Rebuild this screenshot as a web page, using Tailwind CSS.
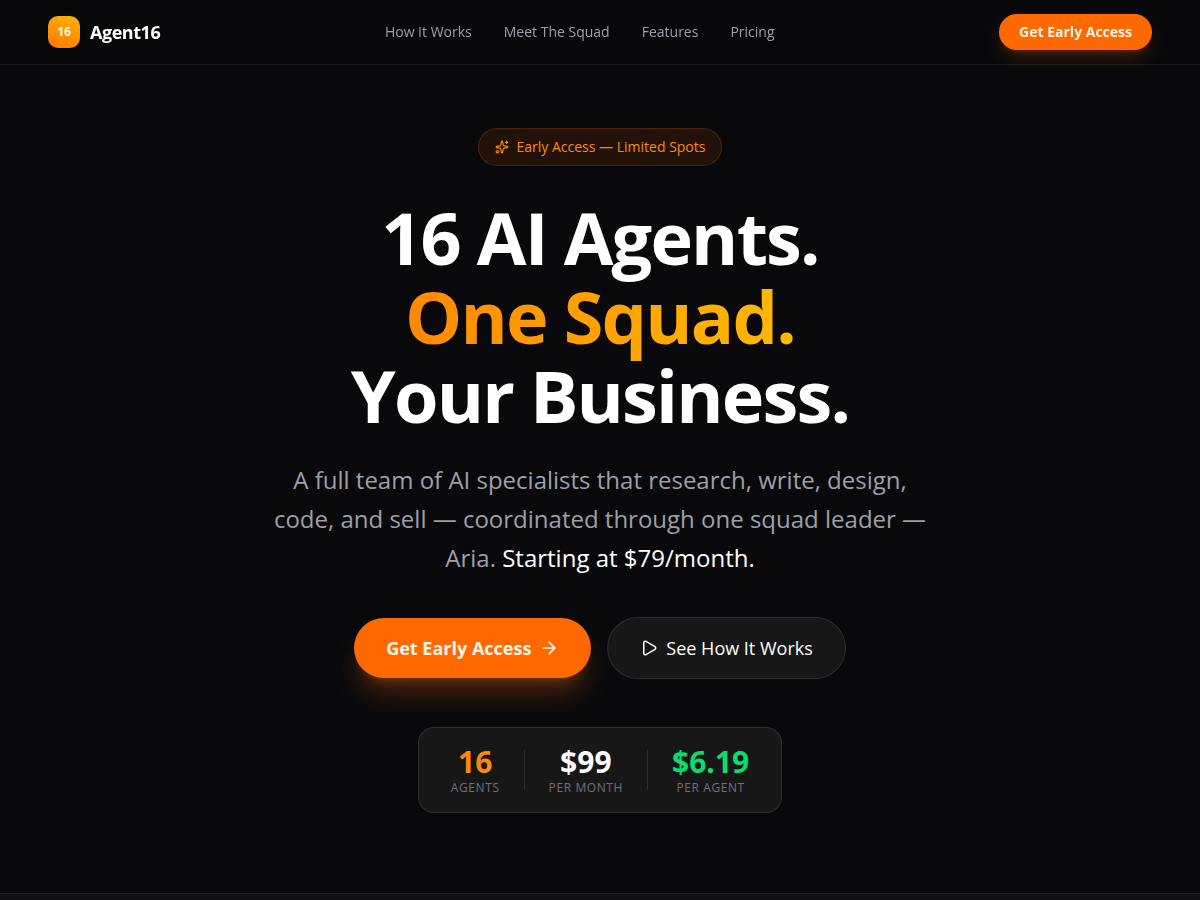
<!DOCTYPE html>
<html lang="en">
<head>
    <meta charset="UTF-8">
    <meta name="viewport" content="width=device-width, initial-scale=1.0">
    <title>Agent16</title>
    <script src="https://cdn.jsdelivr.net/npm/@tailwindcss/browser@4"></script>
</head>
<body class="bg-[#09090b] text-white font-['Open_Sans',sans-serif] antialiased">
    <!-- Navbar -->
    <header class="fixed top-0 inset-x-0 z-10 border-b border-white/8 bg-[#09090b]/80">
        <div class="h-16 px-12 flex items-center justify-between">
            <a href="#" class="flex items-center gap-2.5">
                <span class="w-8 h-8 rounded-[10px] bg-linear-[20deg] from-[#ff7600] to-[#ffb400] flex items-center justify-center text-xs font-bold">16</span>
                <span class="text-lg font-bold tracking-tight">Agent16</span>
            </a>
            <nav class="flex items-center gap-8 text-sm text-[#9f9fa9]">
                <a href="#how">How It Works</a>
                <a href="#squad">Meet The Squad</a>
                <a href="#features">Features</a>
                <a href="#pricing">Pricing</a>
            </nav>
            <button type="button" class="px-5 py-2 rounded-full bg-[#ff6900] text-sm font-bold text-[#fff7ed] shadow-lg shadow-[#ff6900]/20">Get Early Access</button>
        </div>
    </header>

    <main class="min-h-screen flex flex-col">
        <!-- Hero -->
        <section class="pt-32 pb-20 px-6 flex flex-col items-center text-center">
            <div class="mb-8 px-4 py-2 flex items-center gap-2 rounded-full border border-[#ff6900]/20 bg-[#ff6900]/10 text-sm text-[#ff8904]">
                <svg class="w-3.5 h-3.5" viewBox="0 0 24 24" fill="none" stroke="currentColor" stroke-width="2" stroke-linecap="round" stroke-linejoin="round" aria-hidden="true">
                    <path d="M11.017 2.814a1 1 0 0 1 1.966 0l1.051 5.558a2 2 0 0 0 1.594 1.594l5.558 1.051a1 1 0 0 1 0 1.966l-5.558 1.051a2 2 0 0 0-1.594 1.594l-1.051 5.558a1 1 0 0 1-1.966 0l-1.051-5.558a2 2 0 0 0-1.594-1.594l-5.558-1.051a1 1 0 0 1 0-1.966l5.558-1.051a2 2 0 0 0 1.594-1.594z" />
                    <path d="M20 2v4" />
                    <path d="M22 4h-4" />
                    <circle cx="4" cy="20" r="2" />
                </svg>
                <span>Early Access — Limited Spots</span>
            </div>

            <h1 class="mb-6 text-7xl leading-[1.1] font-bold tracking-tight">
                16 AI Agents.<br>
                <span class="bg-linear-to-r from-[#ff8904] to-[#ffb900] bg-clip-text text-transparent">One Squad.</span><br>
                Your Business.
            </h1>

            <p class="mb-10 max-w-2xl text-2xl leading-[39px] text-[#9f9fa9]">
                A full team of AI specialists that research, write, design, code, and sell — coordinated through one squad leader — Aria. <span class="text-white">Starting at $79/month.</span>
            </p>

            <div class="mb-12 flex items-center gap-4">
                <button type="button" class="px-8 py-4 flex items-center gap-2 rounded-full bg-[#ff6900] text-lg font-bold text-[#fff7ed] shadow-xl shadow-[#ff6900]/25">
                    Get Early Access
                    <svg class="w-5 h-5" viewBox="0 0 24 24" fill="none" stroke="currentColor" stroke-width="2" stroke-linecap="round" stroke-linejoin="round" aria-hidden="true">
                        <path d="M5 12h14" />
                        <path d="m12 5 7 7-7 7" />
                    </svg>
                </button>
                <button type="button" class="px-8 py-4 flex items-center gap-2 rounded-full border border-white/10 bg-[#171717] text-lg">
                    <svg class="w-[18px] h-[18px]" viewBox="0 0 24 24" fill="none" stroke="currentColor" stroke-width="2" stroke-linecap="round" stroke-linejoin="round" aria-hidden="true">
                        <path d="M5 5a2 2 0 0 1 3.008-1.728l11.997 6.998a2 2 0 0 1 .003 3.458l-12 7A2 2 0 0 1 5 19z" />
                    </svg>
                    See How It Works
                </button>
            </div>

            <!-- Stats -->
            <div class="px-8 py-4 flex items-center gap-6 rounded-2xl border border-white/10 bg-[#171717]">
                <div>
                    <div class="text-3xl font-bold text-[#ff8904]">16</div>
                    <div class="text-xs tracking-wider uppercase text-[#71717b]">Agents</div>
                </div>
                <div class="w-px h-10 bg-white/10"></div>
                <div>
                    <div class="text-3xl font-bold">$99</div>
                    <div class="text-xs tracking-wider uppercase text-[#71717b]">Per month</div>
                </div>
                <div class="w-px h-10 bg-white/10"></div>
                <div>
                    <div class="text-3xl font-bold text-[#05df72]">$6.19</div>
                    <div class="text-xs tracking-wider uppercase text-[#71717b]">Per agent</div>
                </div>
            </div>
        </section>

        <section id="how" class="grow border-t border-white/8 bg-[#0f0f11]"></section>
    </main>
</body>
</html>
